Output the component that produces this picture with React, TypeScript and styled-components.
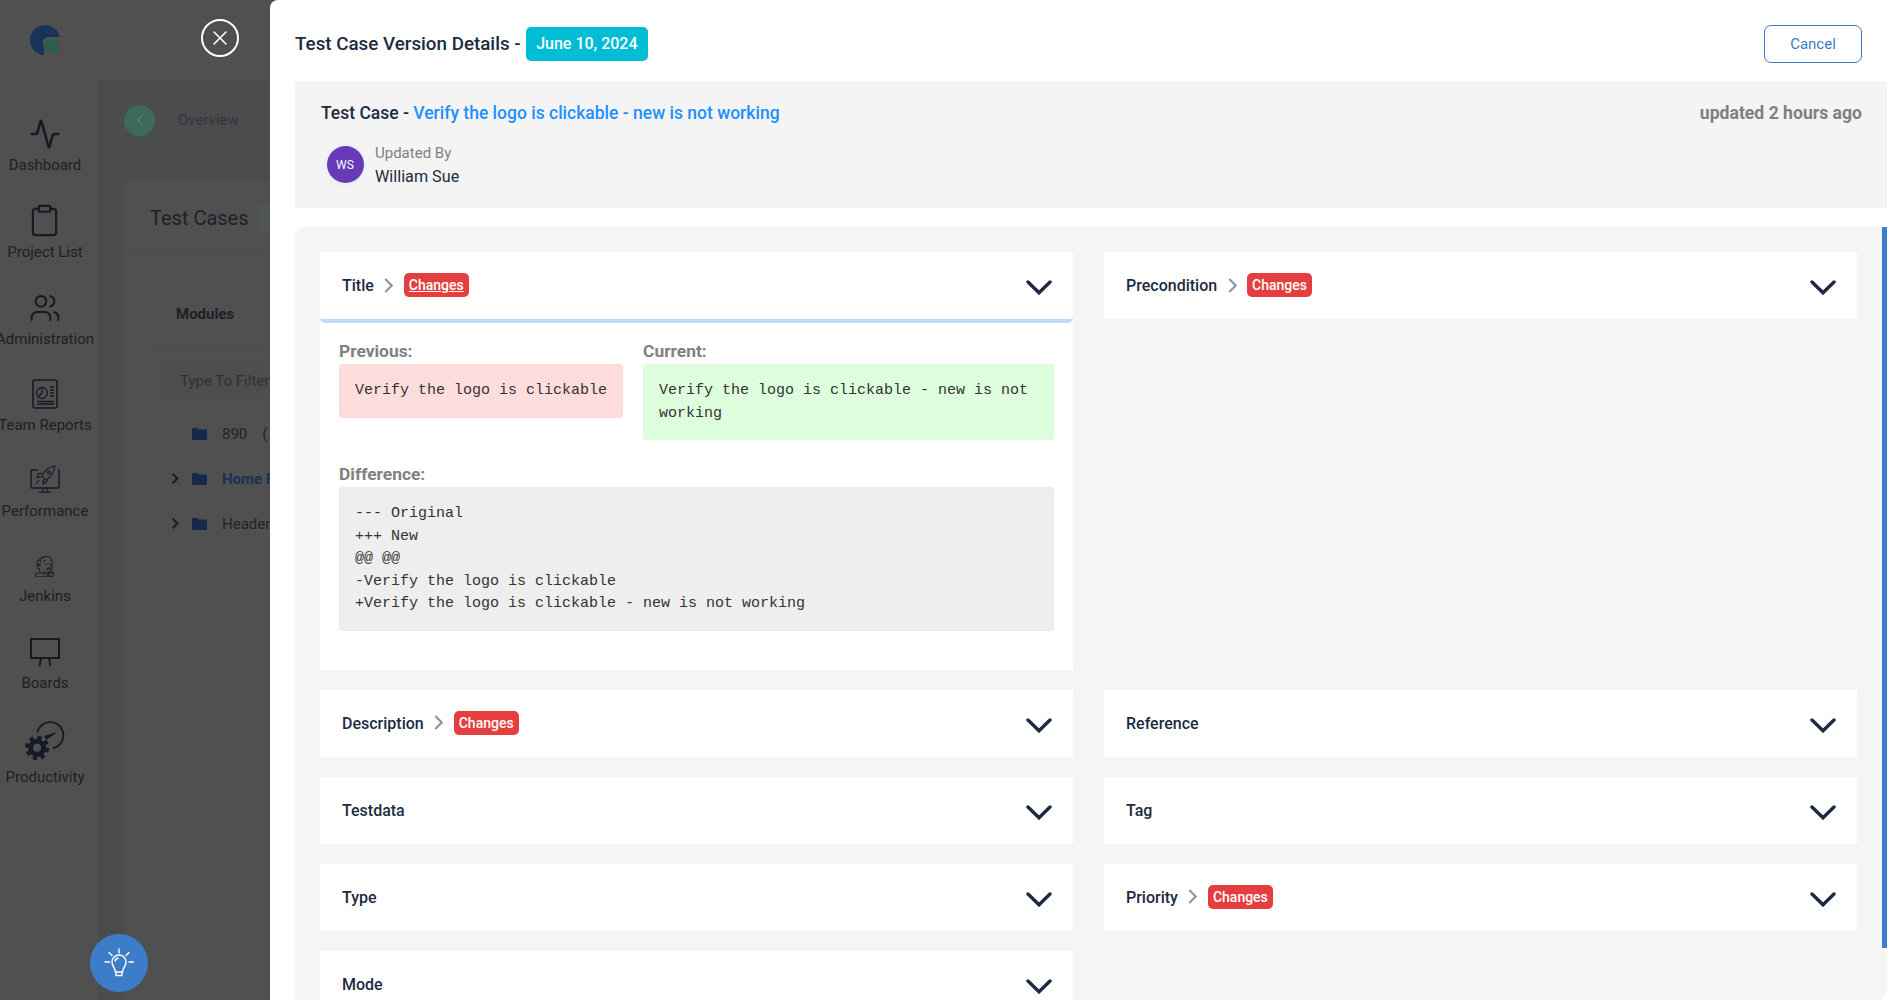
import React from "react";
import styled, { createGlobalStyle } from "styled-components";
import { Activity, Clipboard, Users } from "lucide-react";
import { FaJenkins } from "react-icons/fa";

const GlobalStyle = createGlobalStyle`
  html, body {
    margin: 0;
    padding: 0;
    height: 1000px;
    overflow: hidden;
    font-family: Roboto, "Liberation Sans", sans-serif;
  }
  * { box-sizing: border-box; }
`;

const Page = styled.div`
  display: flex;
  position: relative;
  width: 1892px;
  height: 1000px;
  overflow: hidden;
  background: #505050;
`;

/* dimmed app behind the drawer */
const Sidebar = styled.aside`
  flex: 0 0 98px;
  min-width: 0;
  padding-right: 8px;
  display: flex;
  flex-direction: column;
  align-items: center;
`;
const LogoSlot = styled.div`
  height: 87px;
  padding-top: 25px;
  display: flex;
  justify-content: center;
`;
const NavItem = styled.div<{ $h: number; $gap: number }>`
  height: ${(p) => p.$h}px;
  flex: none;
  display: flex;
  flex-direction: column;
  justify-content: flex-end;
  align-items: center;
  gap: ${(p) => p.$gap}px;
  color: #151b25;
`;
const NavLabel = styled.span`
  font-size: 15px;
  line-height: 18px;
  color: #1c2027;
  white-space: nowrap;
`;
const Main = styled.main`
  flex: 1;
  display: flex;
  flex-direction: column;
  min-width: 0;
`;
const TopBar = styled.div`
  height: 80px;
  flex: none;
`;
const Content = styled.div`
  flex: 1;
  background: #4a4c4e;
  padding-left: 27px;
  display: flex;
  flex-direction: column;
`;
const Crumb = styled.div`
  height: 101px;
  flex: none;
  display: flex;
  align-items: center;
  gap: 23px;
  padding: 0 0 21px;
  font-size: 15px;
  color: #33373b;
`;
const BackDot = styled.span`
  width: 31px;
  height: 31px;
  margin-left: -1px;
  border-radius: 50%;
  background: #3e6a5a;
  color: #5a8273;
  display: flex;
  align-items: center;
  justify-content: center;
`;
const CasesCard = styled.div`
  flex: 1;
  background: #505050;
  border-radius: 6px 0 0 0;
  display: flex;
  flex-direction: column;
`;
const CasesHead = styled.div`
  height: 74px;
  flex: none;
  padding-left: 25px;
  display: flex;
  align-items: center;
  gap: 10px;
  font-size: 20px;
  color: #1d222a;
  border-bottom: 1px solid #4c4c4c;
`;
const CasesTag = styled.span`
  width: 60px;
  height: 29px;
  border-radius: 4px;
  background: #4e5552;
`;
const ModulesPanel = styled.div`
  margin: 25px 0 0 25px;
  flex: 1;
  display: flex;
  flex-direction: column;
`;
const ModulesHead = styled.div`
  height: 68px;
  flex: none;
  display: flex;
  align-items: center;
  padding-left: 26px;
  font-size: 15px;
  font-weight: 700;
  color: #1c2027;
  border-bottom: 1px solid #4c4c4c;
`;
const FilterBox = styled.div`
  margin: 14px 0 11px 13px;
  height: 38px;
  padding-left: 17px;
  display: flex;
  align-items: center;
  font-size: 15px;
  color: #313131;
  background: #4e4e4e;
  border-radius: 4px;
  white-space: nowrap;
`;
const TreeRow = styled.div<{ $active?: boolean }>`
  height: 45px;
  flex: none;
  display: flex;
  align-items: center;
  padding-left: 42px;
  gap: 15px;
  font-size: 15px;
  white-space: nowrap;
  font-weight: ${(p) => (p.$active ? 700 : 400)};
  color: ${(p) => (p.$active ? "#1c3150" : "#20242b")};
`;
const TreeArrow = styled.span`
  width: 17px;
  margin-left: -21px;
  margin-right: -11px;
  display: flex;
  color: #1e1e1e;
`;

const CloseButton = styled.button`
  position: absolute;
  left: 201px;
  top: 19px;
  width: 38px;
  height: 38px;
  border-radius: 50%;
  border: 2px solid #fff;
  background: transparent;
  color: #fff;
  padding: 0;
  display: flex;
  align-items: center;
  justify-content: center;
`;
const HelpFab = styled.button`
  position: absolute;
  left: 90px;
  top: 934px;
  width: 58px;
  height: 58px;
  border-radius: 50%;
  border: 0;
  padding: 0;
  background: #3d7cc9;
  display: flex;
  align-items: center;
  justify-content: center;
`;

/* drawer */
const Drawer = styled.section`
  position: absolute;
  left: 270px;
  top: 0;
  width: 1622px;
  height: 1000px;
  background: #fff;
  border-radius: 8px 0 0 0;
  display: flex;
  flex-direction: column;
  overflow: hidden;
  color: #1c2b41;
`;
const DrawerHead = styled.header`
  height: 81px;
  flex: none;
  padding: 25px 30px 0 25px;
  display: flex;
  justify-content: space-between;
  align-items: flex-start;
`;
const HeadTitle = styled.div`
  display: flex;
  align-items: center;
  gap: 5px;
  height: 37px;
  font-size: 18.8px;
  font-weight: 500;
`;
const DateBadge = styled.span`
  background: #00bcd4;
  color: #fff;
  font-size: 16px;
  font-weight: 500;
  height: 34px;
  padding: 0 10.5px;
  border-radius: 5px;
  display: flex;
  align-items: center;
`;
const CancelButton = styled.button`
  width: 98px;
  height: 38px;
  border: 1px solid #3d7cc9;
  border-radius: 7px;
  background: #fff;
  color: #3d7cc9;
  font: 400 15px Roboto, sans-serif;
`;
const InfoBar = styled.div`
  margin: 0 5px 0 25px;
  height: 127px;
  flex: none;
  background: #f4f4f4;
  padding: 20px 25px 0 26px;
  display: flex;
  justify-content: space-between;
  align-items: flex-start;
`;
const CaseTitle = styled.div`
  font-size: 17.5px;
  font-weight: 500;
  line-height: 24px;
`;
const CaseLink = styled.span`
  color: #1e90ff;
`;
const UpdatedAgo = styled.div`
  font-size: 17.6px;
  font-weight: 700;
  line-height: 24px;
  color: #808080;
`;
const UpdatedRow = styled.div`
  display: flex;
  align-items: center;
  gap: 8px;
  margin-top: 15px;
  margin-left: 2px;
`;
const AvatarRing = styled.span`
  width: 44px;
  height: 44px;
  border-radius: 50%;
  background: #edf1f5;
  display: flex;
  align-items: center;
  justify-content: center;
`;
const Avatar = styled.span`
  width: 37px;
  height: 37px;
  border-radius: 50%;
  background: #673ab7;
  color: #fff;
  font-size: 12px;
  display: flex;
  align-items: center;
  justify-content: center;
`;
const UpdatedText = styled.div`
  padding-top: 3px;
`;
const UpdatedLabel = styled.div`
  font-size: 15px;
  line-height: 20px;
  color: #808080;
`;
const UpdatedName = styled.div`
  font-size: 16.2px;
  line-height: 24px;
  margin-top: 2px;
`;
const DiffPanel = styled.div`
  position: relative;
  margin: 19px 5px 0 25px;
  flex: 1;
  min-height: 0;
  background: #f5f5f5;
  border-radius: 10px 0 10px 0;
  padding: 25px 30px 0 25px;
  overflow: hidden;
`;
const ScrollThumb = styled.div`
  position: absolute;
  top: 0;
  right: 0;
  width: 5px;
  height: 721px;
  background: #3d7cc9;
`;
const FieldGrid = styled.div`
  display: grid;
  grid-template-columns: 753px 753px;
  column-gap: 31px;
  row-gap: 20px;
  align-items: start;
`;
const FieldCard = styled.div`
  background: #fff;
`;
const FieldHead = styled.div<{ $open?: boolean }>`
  height: ${(p) => (p.$open ? 71 : 67)}px;
  padding: 0 21px 1px 22px;
  display: flex;
  align-items: center;
  justify-content: space-between;
  border-radius: ${(p) => (p.$open ? "5px" : "0")};
  border-bottom: ${(p) => (p.$open ? "4px solid #bddcfb" : "none")};
`;
const FieldName = styled.div`
  display: flex;
  align-items: center;
  font-size: 16px;
  font-weight: 500;
`;
const FieldText = styled.span`
  padding-top: 1px;
`;
const NameArrow = styled.span`
  display: flex;
  margin: 0 10.5px;
  color: #8c95a3;
`;
const ChangesBadge = styled.span<{ $underline?: boolean }>`
  background: #e53e3e;
  color: #fff;
  font-size: 14px;
  font-weight: 500;
  height: 24px;
  padding: 0 5px;
  border-radius: 5px;
  display: flex;
  align-items: center;
  text-decoration: ${(p) => (p.$underline ? "underline" : "none")};
`;
const ChevronSlot = styled.span`
  display: flex;
  margin-top: 5px;
`;
const FieldBody = styled.div`
  padding: 16px 19px 39px;
`;
const CompareRow = styled.div`
  display: flex;
  align-items: flex-start;
  gap: 20px;
  margin-bottom: 22px;
`;
const CompareCol = styled.div<{ $grow?: boolean }>`
  flex: ${(p) => (p.$grow ? "1 1 0" : "0 0 auto")};
  min-width: 0;
`;
const DiffLabel = styled.div`
  font-size: 17.4px;
  font-weight: 700;
  line-height: 24px;
  margin-bottom: 1px;
  color: #808080;
`;
const CodeBox = styled.pre<{ $bg: string }>`
  margin: 0;
  padding: 15px 15px 14px;
  border: 1px solid rgba(0, 0, 0, 0.015);
  border-radius: 4px;
  background: ${(p) => p.$bg};
  font-family: "Liberation Mono", monospace;
  font-size: 15px;
  line-height: 22.5px;
  color: #333;
  white-space: pre-wrap;
`;
const Flip = styled.span`
  display: flex;
  transform: scaleX(-1);
`;

const LogoMark = () => (
  <svg width="30" height="30" viewBox="0 0 30 30">
    <path d="M14 30A15 15 0 1 1 29.7 12L18 12A5.5 5.5 0 0 0 14 21Z" fill="#16335a" />
    <path d="M15 15H30L27 20L30 25L25 29L20 24L15.6 28.3Z" fill="#2a6047" />
  </svg>
);

const TeamReportsIcon = () => (
  <svg width="26" height="30" viewBox="0 0 26 30" fill="none" stroke="currentColor" strokeWidth="1.3">
    <rect x="1" y="1" width="24" height="28" rx="2" strokeWidth="1.6" />
    <circle cx="10" cy="14" r="5.5" />
    <path d="M10 14V8.5M10 14L6 18" />
    <path d="M18 8H22M18 11H22M18 14H22M18 17H22M5 22.5H22M5 25H22" />
  </svg>
);

const PerformanceIcon = () => (
  <svg width="30" height="28" viewBox="0 0 30 28" fill="none" stroke="currentColor" strokeWidth="1.2">
    <path d="M8 5H2a1 1 0 0 0-1 1V22a1 1 0 0 0 1 1H28a1 1 0 0 0 1-1V6a1 1 0 0 0-1-1" strokeWidth="1.4" />
    <path d="M13 23V27M17 23V27M9 27.2H21" />
    <path d="M25 1C20 1.5 15 5 12 11L15 15C21 13 24 7 25 1Z" />
    <path d="M12 8L8.5 9L7 12.5L11 12M17 14L17 16.5L13 19L13.5 15" />
    <path d="M9 15L6 19" />
    <circle cx="19" cy="7.5" r="1.5" />
  </svg>
);

const BoardsIcon = () => (
  <svg width="30" height="29" viewBox="0 0 30 29" fill="none" stroke="currentColor" strokeWidth="2">
    <rect x="1" y="1" width="28" height="19" />
    <path d="M11 20L9.5 28M19 20L20.5 28" />
  </svg>
);

const ProductivityIcon = () => (
  <svg width="40" height="40" viewBox="0 0 38 38" fill="none" stroke="currentColor">
    <circle cx="11.5" cy="25.5" r="6.2" strokeWidth="4.8" />
    <circle cx="11.5" cy="25.5" r="9.8" strokeWidth="3.4" strokeDasharray="4 3.7" />
    <path d="M11.7 11A12.5 12.5 0 1 1 26.5 25.8" strokeWidth="1.7" />
    <path d="M19 14.5L29 11.5L20.5 17Z" fill="currentColor" strokeWidth="1" />
  </svg>
);

const FolderIcon = () => (
  <svg width="15" height="12" viewBox="0 0 15 12">
    <path d="M0 1.2C0 .5.5 0 1.2 0H5L6.5 1.5H13.8C14.5 1.5 15 2 15 2.7V10.8C15 11.5 14.5 12 13.8 12H1.2C.5 12 0 11.5 0 10.8Z" fill="#16294a" />
  </svg>
);

const SmallChevron = ({ w = 9, h = 15, sw = 2 }: { w?: number; h?: number; sw?: number }) => (
  <svg width={w} height={h} viewBox="0 0 8 14" fill="none" stroke="currentColor" strokeWidth={sw}>
    <path d="M1 1L7 7L1 13" />
  </svg>
);

const DownChevron = () => (
  <svg width="26" height="15" viewBox="0 0 26 15" fill="none" stroke="#1c2b41" strokeWidth="3.4" strokeLinecap="round">
    <path d="M2 2L13 12.8L24 2" />
  </svg>
);

const BulbIcon = () => (
  <svg width="30" height="30" viewBox="0 0 30 30" fill="none" stroke="#fff" strokeWidth="1.4">
    <path d="M15 1V5M5 4.5L8 7.5M25 4.5L22 7.5M1 14H5.5M25 14H29.5" strokeLinecap="round" />
    <path d="M11.5 24C11.5 20 8 18.5 8 14A7 7 0 0 1 22 14C22 18.5 18.5 20 18.5 24Z" />
    <path d="M12 24V27.5H18V24M11 13.5A4 4 0 0 1 14.5 10" />
  </svg>
);

const NAV: Array<{ label: string; h: number; gap: number; icon: React.ReactNode }> = [
  { label: "Dashboard", h: 87, gap: 6, icon: <Activity size={32} strokeWidth={1.9} /> },
  { label: "Project List", h: 87, gap: 5, icon: <Clipboard size={35} strokeWidth={1.5} /> },
  { label: "Administration", h: 87, gap: 6, icon: <Users size={32} strokeWidth={1.5} /> },
  { label: "Team Reports", h: 86, gap: 7, icon: <TeamReportsIcon /> },
  { label: "Performance", h: 86, gap: 9, icon: <PerformanceIcon /> },
  { label: "Jenkins", h: 85, gap: 10, icon: <FaJenkins size={21} color="#0e1117" /> },
  { label: "Boards", h: 87, gap: 7, icon: <BoardsIcon /> },
  { label: "Productivity", h: 94, gap: 7, icon: <ProductivityIcon /> },
];

const FIELDS: Array<{ name: string; changed?: boolean; open?: boolean }> = [
  { name: "Title", changed: true, open: true },
  { name: "Precondition", changed: true },
  { name: "Description", changed: true },
  { name: "Reference" },
  { name: "Testdata" },
  { name: "Tag" },
  { name: "Type" },
  { name: "Priority", changed: true },
  { name: "Mode" },
];

const DIFF = `--- Original
+++ New
@@ @@
-Verify the logo is clickable
+Verify the logo is clickable - new is not working`;

const App = () => {
  return (
    <Page>
      <GlobalStyle />
      <Sidebar>
        <LogoSlot>
          <LogoMark />
        </LogoSlot>
        {NAV.map((item) => (
          <NavItem key={item.label} $h={item.h} $gap={item.gap}>
            {item.icon}
            <NavLabel>{item.label}</NavLabel>
          </NavItem>
        ))}
      </Sidebar>
      <Main>
        <TopBar />
        <Content>
          <Crumb>
            <BackDot>
              <Flip>
                <SmallChevron w={6} h={10} sw={1.8} />
              </Flip>
            </BackDot>
            Overview
          </Crumb>
          <CasesCard>
            <CasesHead>
              Test Cases
              <CasesTag />
            </CasesHead>
            <ModulesPanel>
              <ModulesHead>Modules</ModulesHead>
              <FilterBox>Type To Filter</FilterBox>
              <TreeRow>
                <FolderIcon />
                890 &nbsp;&nbsp;&nbsp;(
              </TreeRow>
              <TreeRow $active>
                <TreeArrow>
                  <SmallChevron w={8} h={11} sw={2.6} />
                </TreeArrow>
                <FolderIcon />
                Home Page
              </TreeRow>
              <TreeRow>
                <TreeArrow>
                  <SmallChevron w={8} h={11} sw={2.6} />
                </TreeArrow>
                <FolderIcon />
                Header
              </TreeRow>
            </ModulesPanel>
          </CasesCard>
        </Content>
      </Main>

      <CloseButton aria-label="Close">
        <svg width="16" height="16" viewBox="0 0 16 16" stroke="#fff" strokeWidth="1.6" strokeLinecap="round">
          <path d="M2 2L14 14M14 2L2 14" />
        </svg>
      </CloseButton>
      <HelpFab aria-label="Help">
        <BulbIcon />
      </HelpFab>

      <Drawer>
        <DrawerHead>
          <HeadTitle>
            Test Case Version Details -<DateBadge>June 10, 2024</DateBadge>
          </HeadTitle>
          <CancelButton>Cancel</CancelButton>
        </DrawerHead>
        <InfoBar>
          <div>
            <CaseTitle>
              Test Case - <CaseLink>Verify the logo is clickable - new is not working</CaseLink>
            </CaseTitle>
            <UpdatedRow>
              <AvatarRing>
                <Avatar>WS</Avatar>
              </AvatarRing>
              <UpdatedText>
                <UpdatedLabel>Updated By</UpdatedLabel>
                <UpdatedName>William Sue</UpdatedName>
              </UpdatedText>
            </UpdatedRow>
          </div>
          <UpdatedAgo>updated 2 hours ago</UpdatedAgo>
        </InfoBar>
        <DiffPanel>
          <FieldGrid>
            {FIELDS.map((field) => (
              <FieldCard key={field.name}>
                <FieldHead $open={field.open}>
                  <FieldName>
                    <FieldText>{field.name}</FieldText>
                    {field.changed && (
                      <>
                        <NameArrow>
                          <SmallChevron />
                        </NameArrow>
                        <ChangesBadge $underline={field.open}>Changes</ChangesBadge>
                      </>
                    )}
                  </FieldName>
                  <ChevronSlot>
                    <DownChevron />
                  </ChevronSlot>
                </FieldHead>
                {field.open && (
                  <FieldBody>
                    <CompareRow>
                      <CompareCol>
                        <DiffLabel>Previous:</DiffLabel>
                        <CodeBox $bg="#ffdddd">Verify the logo is clickable</CodeBox>
                      </CompareCol>
                      <CompareCol $grow>
                        <DiffLabel>Current:</DiffLabel>
                        <CodeBox $bg="#ddffdd">Verify the logo is clickable - new is not working</CodeBox>
                      </CompareCol>
                    </CompareRow>
                    <DiffLabel>Difference:</DiffLabel>
                    <CodeBox $bg="#eeeeee">{DIFF}</CodeBox>
                  </FieldBody>
                )}
              </FieldCard>
            ))}
          </FieldGrid>
          <ScrollThumb />
        </DiffPanel>
      </Drawer>
    </Page>
  );
};

export default App;
